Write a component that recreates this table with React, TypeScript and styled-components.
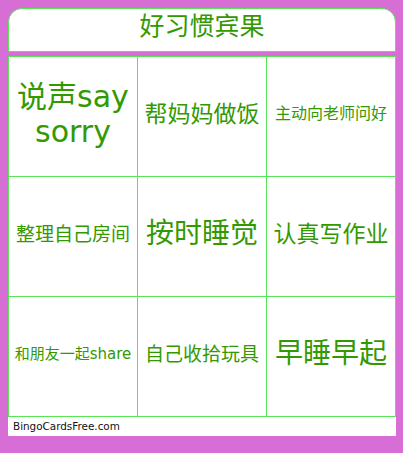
import React from "react";
import styled, { createGlobalStyle } from "styled-components";

const GlobalStyle = createGlobalStyle`
  html, body {
    margin: 0;
    padding: 0;
    background: #d66ed6;
  }
  body {
    font-family: "DejaVu Sans", "Noto Sans CJK SC", sans-serif;
  }
`;

const Page = styled.div`
  width: 403px;
  height: 453px;
  box-sizing: border-box;
  padding: 8px;
  background: #d66ed6;
  display: flex;
  flex-direction: column;
`;

const Header = styled.div`
  width: 388px;
  height: 44px;
  box-sizing: border-box;
  background: #ffffff;
  border: 1px solid #58e658;
  border-radius: 14px 14px 0 0;
  display: flex;
  align-items: center;
  justify-content: center;
  padding-bottom: 7px;
`;

const Title = styled.h1`
  margin: 0;
  font-family: "DejaVu Sans", "Noto Sans CJK SC", sans-serif;
  font-weight: 400;
  font-size: 25px;
  line-height: 1;
  color: #339900;
`;

const Grid = styled.div`
  margin-top: 4px;
  width: 388px;
  box-sizing: border-box;
  display: grid;
  grid-template-columns: repeat(3, 128px);
  grid-template-rows: repeat(3, 119px);
  gap: 1px;
  padding: 1px;
  background: #58e658;
`;

const Cell = styled.div<{ $size: number }>`
  background: #ffffff;
  display: flex;
  align-items: center;
  justify-content: center;
  text-align: center;
  padding: 0 3px 4px;
  box-sizing: border-box;
  color: #339900;
  font-family: "DejaVu Sans", "Noto Sans CJK SC", sans-serif;
  font-size: ${(p) => p.$size}px;
  line-height: 1.15;
`;

const Footer = styled.div`
  width: 388px;
  height: 19px;
  box-sizing: border-box;
  background: #ffffff;
  display: flex;
  align-items: center;
  padding-left: 5px;
  padding-bottom: 1px;
  font-family: "DejaVu Sans", sans-serif;
  font-size: 10.4px;
  color: #111111;
`;

const cells: { text: string; size: number }[] = [
  { text: "说声say sorry", size: 30 },
  { text: "帮妈妈做饭", size: 23 },
  { text: "主动向老师问好", size: 16 },
  { text: "整理自己房间", size: 19 },
  { text: "按时睡觉", size: 28 },
  { text: "认真写作业", size: 23 },
  { text: "和朋友一起share", size: 15 },
  { text: "自己收拾玩具", size: 19 },
  { text: "早睡早起", size: 28 },
];

export default function App() {
  return (
    <>
      <GlobalStyle />
      <Page>
        <Header>
          <Title>好习惯宾果</Title>
        </Header>
        <Grid>
          {cells.map((c, i) => (
            <Cell key={i} $size={c.size}>
              {c.text}
            </Cell>
          ))}
        </Grid>
        <Footer>BingoCardsFree.com</Footer>
      </Page>
    </>
  );
}
